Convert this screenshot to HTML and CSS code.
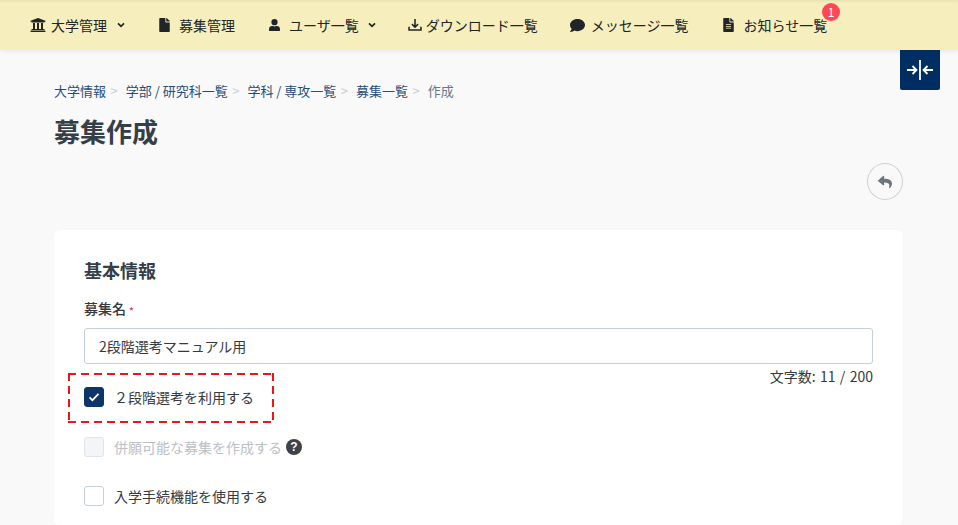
FILE: index.html
```html
<!DOCTYPE html>
<html lang="ja">
<head>
<meta charset="utf-8">
<title>募集作成</title>
<link rel="stylesheet" href="styles.css">
</head>
<body>
<nav class="topnav">
  <a class="nav-item"><svg class="ic ic-bank" viewBox="0 0 512 512"><path d="M496 128v16a8 8 0 0 1-8 8h-24v12c0 6.600-5.400 12-12 12H60c-6.600 0-12-5.400-12-12v-12H24a8 8 0 0 1-8-8v-16a8 8 0 0 1 4.900-7.400l232-88a8 8 0 0 1 6.200 0l232 88A8 8 0 0 1 496 128zm-24 304H40c-13.300 0-24 10.700-24 24v16a8 8 0 0 0 8 8h464a8 8 0 0 0 8-8v-16c0-13.300-10.700-24-24-24zM96 192v192H60c-6.600 0-12 5.400-12 12v20h416v-20c0-6.600-5.400-12-12-12h-36V192h-64v192h-64V192h-64v192h-64V192H96z"/></svg><span>大学管理</span><svg class="chev chev-first" viewBox="0 0 12 8"><path d="M1.500 1.500 6 6l4.500-4.500"/></svg></a>
  <a class="nav-item"><svg class="ic ic-file" viewBox="0 0 384 512"><path d="M224 136V0H24C10.700 0 0 10.700 0 24v464c0 13.300 10.700 24 24 24h336c13.300 0 24-10.700 24-24V160H248c-13.200 0-24-10.800-24-24zm160-14.100v6.100H256V0h6.100c6.400 0 12.500 2.500 17 7l97.900 98c4.500 4.500 7 10.600 7 16.900z"/></svg><span>募集管理</span></a>
  <a class="nav-item nav-narrow"><svg class="ic ic-user" viewBox="0 0 448 512"><path d="M224 256a128 128 0 1 0 0-256 128 128 0 0 0 0 256zm89.600 32h-16.700a174 174 0 0 1-145.800 0h-16.700A134.400 134.400 0 0 0 0 422.400V464c0 26.500 21.500 48 48 48h352c26.500 0 48-21.500 48-48v-41.600A134.400 134.400 0 0 0 313.600 288z"/></svg><span>ユーザ一覧</span><svg class="chev" viewBox="0 0 12 8"><path d="M1.500 1.500 6 6l4.500-4.500"/></svg></a>
  <a class="nav-item nav-narrow"><svg class="ic ic-dl" viewBox="0 0 16 16"><path class="stroke" d="M8 1v9M4.500 7 8 10.500 11.500 7M1.200 10v3.800h13.600V10"/></svg><span>ダウンロード一覧</span></a>
  <a class="nav-item nav-wide"><svg class="ic ic-msg" viewBox="0 0 512 512"><path d="M256 32C114.600 32 0 125.100 0 240c0 49.600 21.400 95 57 130.700C44.500 421.100 2.700 466 2.200 466.500c-2.200 2.300-2.800 5.700-1.500 8.700S4.800 480 8 480c66.300 0 116-31.800 140.600-51.400 32.700 12.300 69 19.400 107.400 19.400 141.400 0 256-93.100 256-208S397.400 32 256 32z"/></svg><span>メッセージ一覧</span></a>
  <a class="nav-item"><svg class="ic ic-file" viewBox="0 0 384 512"><path d="M224 136V0H24C10.700 0 0 10.700 0 24v464c0 13.300 10.700 24 24 24h336c13.300 0 24-10.700 24-24V160H248c-13.200 0-24-10.800-24-24zm64 236c0 6.600-5.400 12-12 12H108c-6.600 0-12-5.400-12-12v-8c0-6.600 5.400-12 12-12h168c6.600 0 12 5.400 12 12v8zm0-64c0 6.600-5.400 12-12 12H108c-6.600 0-12-5.400-12-12v-8c0-6.600 5.400-12 12-12h168c6.600 0 12 5.400 12 12v8zm0-72v8c0 6.600-5.400 12-12 12H108c-6.600 0-12-5.400-12-12v-8c0-6.600 5.400-12 12-12h168c6.600 0 12 5.400 12 12zm96-114.100v6.100H256V0h6.100c6.400 0 12.500 2.500 17 7l97.900 98c4.500 4.500 7 10.600 7 16.900z"/></svg><span>お知らせ一覧</span><b class="badge">1</b></a>
</nav>
<button class="collapse-btn" type="button" aria-label="collapse"><svg viewBox="0 0 28 24"><path d="M14 2v20M1 12h9M6.500 8l4 4-4 4M27 12h-9M21.500 8l-4 4 4 4"/></svg></button>
<main class="page">
  <ol class="crumbs">
    <li><a>大学情報</a></li>
    <li><a>学部 / 研究科一覧</a></li>
    <li><a>学科 / 専攻一覧</a></li>
    <li><a>募集一覧</a></li>
    <li class="current">作成</li>
  </ol>
  <h1 class="title">募集作成</h1>
  <div class="actions">
    <button class="back" type="button" aria-label="back"><svg viewBox="0 0 512 512"><path d="M8.300 189.800 184.300 37.800C199.700 24.500 224 35.300 224 56v80.100c160.600 1.800 288 34 288 186.300 0 61.500-39.600 122.400-83.400 154.200-13.700 9.900-33.100-2.500-28.100-18.600 45.400-145.200-21.500-183.700-176.500-186V360c0 20.700-24.300 31.500-39.700 18.200l-176-152c-11.100-9.600-11.100-26.800 0-36.400z"/></svg></button>
  </div>
  <section class="card">
    <h2 class="card-title">基本情報</h2>
    <label class="field-label">募集名<span class="req">*</span></label>
    <input class="text-input" type="text" value="2段階選考マニュアル用">
    <div class="count">文字数: 11 / 200</div>
    <div class="highlight">
      <label class="check"><span class="box checked"><svg viewBox="0 0 12 10"><path d="M1.500 5.300 4.400 8.200 10.500 1.800"/></svg></span><span class="check-text">２段階選考を利用する</span></label>
    </div>
    <label class="check check-disabled"><span class="box disabled"></span><span class="check-text">併願可能な募集を作成する</span><svg class="help" viewBox="0 0 16 16"><circle cx="8" cy="8" r="8"/><text x="8" y="12.200" text-anchor="middle">?</text></svg></label>
    <label class="check check-last"><span class="box"></span><span class="check-text">入学手続機能を使用する</span></label>
  </section>
</main>
</body>
</html>
```
FILE: styles.css
```css
* { box-sizing: border-box; }
html, body { margin: 0; height: 100%; }
body {
  height: 525px;
  overflow: hidden;
  background: #f9f9f9;
  font-family: "Noto Sans CJK JP", "Noto Sans", sans-serif;
  font-size: 14px;
  color: #343a40;
  position: relative;
}
.topnav {
  display: flex;
  align-items: center;
  height: 50px;
  padding-left: 30px;
  background: #f6efbd;
  box-shadow: 0 1px 5px rgba(0,0,0,.08), inset 0 3px 3px -2px rgba(0,0,0,.08);
  color: #212529;
}
.nav-item { display: flex; align-items: center; margin-right: 33px; position: relative; white-space: nowrap; line-height: 20px; }
.nav-narrow { margin-right: 32px; }
.nav-wide { margin-right: 34px; }
.ic { height: 14px; fill: #212529; flex: none; }
.ic-bank { width: 16px; height: 16px; margin-right: 5px; }
.ic-file { width: 11px; height: 14px; margin-right: 9px; margin-left: 1px; }
.ic-user { width: 11px; height: 12.500px; margin-right: 9px; margin-left: 1px; }
.ic-dl { width: 14px; height: 14px; margin-right: 4px; }
.ic-msg { width: 15px; height: 15px; margin-right: 6px; }
.ic .stroke { fill: none; stroke: #212529; stroke-width: 1.800; }
.chev { width: 8px; height: 6px; margin-left: 9px; fill: none; stroke: #212529; stroke-width: 2.600; }
.chev-first { margin-left: 10px; }
.badge {
  position: absolute;
  right: -13px;
  top: -12px;
  width: 18px;
  height: 18px;
  border-radius: 50%;
  background: #ff4757;
  color: #fff;
  font-size: 12px;
  font-weight: 400;
  line-height: 18px;
  text-align: center;
}
.collapse-btn {
  position: absolute;
  left: 900px;
  top: 50px;
  width: 40px;
  height: 40px;
  padding: 0;
  border: 0;
  border-radius: 0 0 2px 2px;
  background: #002d62;
  display: flex;
  align-items: center;
  justify-content: center;
}
.collapse-btn svg { width: 28px; height: 24px; fill: none; stroke: #fff; stroke-width: 1.800; }
.page { padding: 31px 55px 0 54px; }
.crumbs { display: flex; list-style: none; margin: 0; padding: 0; font-size: 13px; line-height: 20px; color: #6c757d; }
.crumbs li { display: flex; }
.crumbs a { color: #264d78; }
.crumbs li + li::before { content: ">"; color: #c5ccd3; padding: 0 8px 0 4.500px; }
.title { margin: 12px 0 0; font-size: 26px; line-height: 36px; font-weight: 700; color: #343f47; }
.actions { display: flex; justify-content: flex-end; margin-top: 14px; }
.back {
  width: 36px;
  height: 37px;
  padding: 0;
  border: 1px solid #c8d1d9;
  border-radius: 50%;
  background: transparent;
  display: flex;
  align-items: center;
  justify-content: center;
}
.back svg { width: 14px; height: 14px; fill: #6c757d; }
.card {
  margin-top: 30px;
  height: 295px;
  padding: 27px 30px 0;
  background: #fff;
  border-radius: 6px;
  box-shadow: 0 0 4px rgba(0,0,0,.02);
}
.card-title { margin: 0; font-size: 18px; line-height: 27px; font-weight: 700; color: #343f47; }
.field-label { display: block; margin-top: 14px; font-size: 14px; line-height: 20px; font-weight: 500; color: #343a40; }
.req { color: #dc3545; font-size: 10px; margin-left: 3px; vertical-align: -1px; }
.text-input {
  display: block;
  width: 100%;
  height: 36px;
  margin-top: 7px;
  padding: 0 14px;
  border: 1px solid #c3cfd9;
  border-radius: 3px;
  background: #fff;
  font: 14px "Noto Sans CJK JP", sans-serif;
  color: #343a40;
}
.count { text-align: right; font-size: 14px; line-height: 20px; margin-top: 2px; word-spacing: 1.200px; }
.highlight {
  width: 206px;
  height: 50px;
  margin: -13px 0 0 -16px;
  padding: 0 0 2px 16px;
  background:
    repeating-linear-gradient(90deg, #f01414 0 8px, transparent 8px 13px) left top / 100% 2px no-repeat,
    repeating-linear-gradient(90deg, #f01414 0 8px, transparent 8px 13px) left bottom / 100% 2px no-repeat,
    repeating-linear-gradient(180deg, #f01414 0 8px, transparent 8px 13px) left top / 2px 100% no-repeat,
    repeating-linear-gradient(180deg, #f01414 0 8px, transparent 8px 13px) right top / 2px 100% no-repeat;
  display: flex;
  align-items: center;
}
.check { display: flex; align-items: center; height: 20px; font-size: 14px; }
.box { width: 20px; height: 20px; flex: none; border: 1px solid #c3cfd9; border-radius: 3px; background: #fff; display: flex; align-items: center; justify-content: center; }
.box.checked { background: #0d3569; border-color: #0d3569; }
.box.checked svg { width: 12px; height: 10px; fill: none; stroke: #fff; stroke-width: 1.700; }
.box.disabled { background: #f3f6f8; border-color: #dfe5ea; }
.check-text { margin-left: 10px; }
.check-disabled { margin-top: 14px; color: #b9c0c6; }
.help { width: 16px; height: 16px; margin-left: 4px; }
.help circle { fill: #3f4247; }
.help text { fill: #fff; font: 700 12px "Liberation Sans", sans-serif; }
.check-last { margin-top: 29px; }
```
